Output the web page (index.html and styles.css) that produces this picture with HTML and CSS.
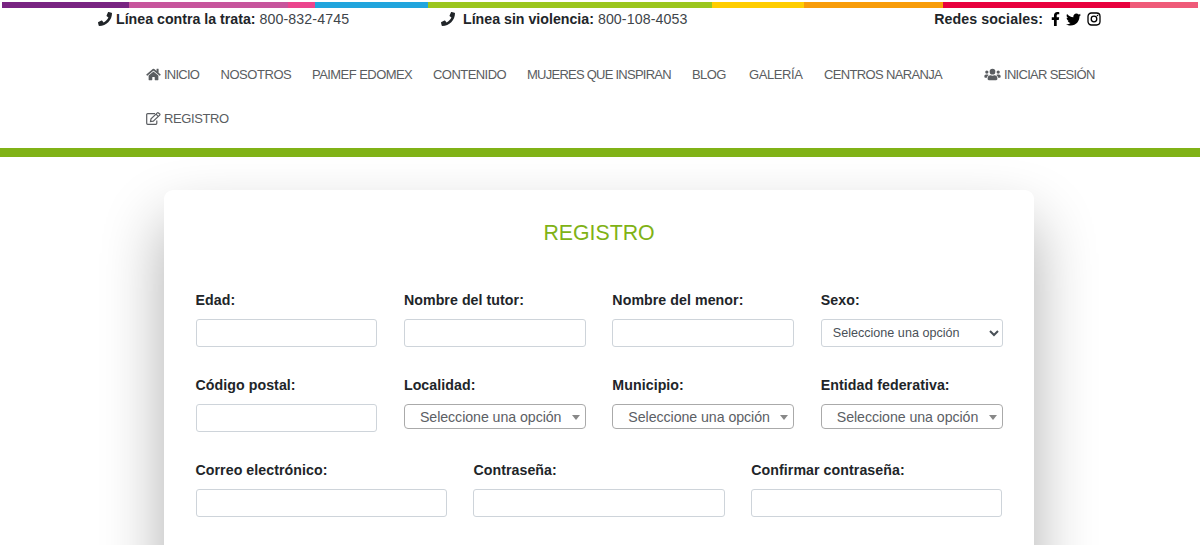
FILE: index.html
```html
<!DOCTYPE html>
<html lang="es">
<head>
    <meta charset="UTF-8">
    <meta name="viewport" content="width=device-width, initial-scale=1.0">
    <title>Registro</title>
    <link rel="stylesheet" href="styles.css">
</head>
<body>
    <header class="header">
        <div class="stripe"></div>
        <div class="top-bar">
            <div class="phone-line">
                <svg class="icon-phone" viewBox="0 0 512 512"><path d="M493.4 24.6l-104-24c-11.3-2.6-22.9 3.3-27.5 13.9l-48 112c-4.2 9.8-1.4 21.3 6.9 28l60.6 49.6c-36 76.7-98.9 140.5-177.2 177.2l-49.6-60.6c-6.8-8.3-18.2-11.1-28-6.9l-112 48C3.9 366.5-2 378.1.6 389.4l24 104C27.1 504.2 36.7 512 48 512c256.1 0 464-207.5 464-464 0-11.2-7.7-20.9-18.6-23.4z"/></svg>
                <b>Línea contra la trata:</b> <span>800-832-4745</span>
            </div>
            <div class="phone-line second">
                <svg class="icon-phone" viewBox="0 0 512 512"><path d="M493.4 24.6l-104-24c-11.3-2.6-22.9 3.3-27.5 13.9l-48 112c-4.2 9.8-1.4 21.3 6.9 28l60.6 49.6c-36 76.7-98.9 140.5-177.2 177.2l-49.6-60.6c-6.8-8.3-18.2-11.1-28-6.9l-112 48C3.9 366.5-2 378.1.6 389.4l24 104C27.1 504.2 36.7 512 48 512c256.1 0 464-207.5 464-464 0-11.2-7.7-20.9-18.6-23.4z"/></svg>
                <b>Línea sin violencia:</b> <span>800-108-4053</span>
            </div>
            <div class="social">
                <b>Redes sociales:</b>
                <svg class="icon-fb" viewBox="0 0 320 512"><path d="M279.14 288l14.22-92.66h-88.91v-60.13c0-25.35 12.42-50.06 52.24-50.06h40.42V6.26S260.43 0 225.36 0c-73.22 0-121.08 44.38-121.08 124.72v70.62H22.89V288h81.39v224h100.17V288z"/></svg>
                <svg class="icon-tw" viewBox="0 0 512 512"><path d="M459.37 151.716c.325 4.548.325 9.097.325 13.645 0 138.72-105.583 298.558-298.558 298.558-59.452 0-114.68-17.219-161.137-47.106 8.447.974 16.568 1.299 25.34 1.299 49.055 0 94.213-16.568 130.274-44.832-46.132-.975-84.792-31.188-98.112-72.772 6.498.974 12.995 1.624 19.818 1.624 9.421 0 18.843-1.3 27.614-3.573-48.081-9.747-84.143-51.98-84.143-102.985v-1.299c13.969 7.797 30.214 12.67 47.431 13.319-28.264-18.843-46.781-51.005-46.781-87.391 0-19.492 5.197-37.36 14.294-52.954 51.655 63.675 129.3 105.258 216.365 109.807-1.624-7.797-2.599-15.918-2.599-24.04 0-57.828 46.782-104.934 104.934-104.934 30.213 0 57.502 12.67 76.67 33.137 23.715-4.548 46.456-13.32 66.599-25.34-7.798 24.366-24.366 44.833-46.132 57.827 21.117-2.273 41.584-8.122 60.426-16.243-14.292 20.791-32.161 39.308-52.628 54.253z"/></svg>
                <svg class="icon-ig" viewBox="0 0 14 14"><rect x="1" y="1" width="12" height="12" rx="3.4"/><circle cx="7" cy="7" r="2.8"/><circle class="dot" cx="10.5" cy="3.5" r=".8"/></svg>
            </div>
        </div>

        <nav class="nav">
            <a href="#" class="nav-link inicio">
                <svg class="icon-home" viewBox="0 0 576 512"><path d="M280.37 148.26L96 300.11V464a16 16 0 0 0 16 16l112.06-.29a16 16 0 0 0 15.92-16V368a16 16 0 0 1 16-16h64a16 16 0 0 1 16 16v95.64a16 16 0 0 0 16 16.05L464 480a16 16 0 0 0 16-16V300L295.67 148.26a12.19 12.19 0 0 0-15.3 0zM571.6 251.47L488 182.56V44.05a12 12 0 0 0-12-12h-56a12 12 0 0 0-12 12v72.61L318.47 43a48 48 0 0 0-61 0L4.34 251.47a12 12 0 0 0-1.6 16.9l25.5 31A12 12 0 0 0 45.15 301l235.22-193.74a12.19 12.19 0 0 1 15.3 0L530.9 301a12 12 0 0 0 16.9-1.6l25.5-31a12 12 0 0 0-1.7-16.93z"/></svg>
                <span>INICIO</span>
            </a>
            <a href="#" class="nav-link nosotros">NOSOTROS</a>
            <a href="#" class="nav-link paimef">PAIMEF EDOMEX</a>
            <a href="#" class="nav-link contenido">CONTENIDO</a>
            <a href="#" class="nav-link mujeres">MUJERES QUE INSPIRAN</a>
            <a href="#" class="nav-link blog">BLOG</a>
            <a href="#" class="nav-link galeria">GALERÍA</a>
            <a href="#" class="nav-link centros">CENTROS NARANJA</a>
            <a href="#" class="nav-link sesion">
                <svg class="icon-users" viewBox="0 0 640 512"><circle cx="96" cy="160" r="64"/><circle cx="544" cy="160" r="64"/><circle cx="320" cy="144" r="112"/><path d="M64 256h64c18 0 34 7 45 19-40 22-69 62-75 109H32c-18 0-32-14-32-32v-32c0-35 29-64 64-64zM576 256h-64c-18 0-34 7-45 19 40 22 69 62 75 109h66c18 0 32-14 32-32v-32c0-35-29-64-64-64zM243 288c50 22 104 22 154 0 64 0 115 52 115 115v29c0 27-21 48-48 48H176c-27 0-48-21-48-48v-29c0-63 52-115 115-115z"/></svg>
                <span>INICIAR SESIÓN</span>
            </a>
            <a href="#" class="nav-link registro">
                <svg class="icon-edit" viewBox="0 0 15 13"><path d="M9 1.600H1.700Q.7 1.600 .7 2.600V11.300Q.7 12.300 1.700 12.300H9.800Q10.800 12.300 10.800 11.300V8.500"/><path d="M4.500 9.500L5 6.900L11.300 .9Q11.900 .5 12.500 1L13.700 2Q14.200 2.600 13.700 3.200L7.300 9.100Z"/><path d="M10 2.200L12.200 4.400"/></svg>
                <span>REGISTRO</span>
            </a>
        </nav>
    </header>

    <main class="card">
        <h2>REGISTRO</h2>
        <form>
            <div class="row">
                <div class="form-group">
                    <label for="edad">Edad:</label>
                    <input type="text" id="edad" class="form-control">
                </div>
                <div class="form-group">
                    <label for="tutor">Nombre del tutor:</label>
                    <input type="text" id="tutor" class="form-control">
                </div>
                <div class="form-group">
                    <label for="menor">Nombre del menor:</label>
                    <input type="text" id="menor" class="form-control">
                </div>
                <div class="form-group">
                    <label for="sexo">Sexo:</label>
                    <select id="sexo" class="form-control">
                        <option>Seleccione una opción</option>
                    </select>
                </div>
            </div>

            <div class="row">
                <div class="form-group">
                    <label for="cp">Código postal:</label>
                    <input type="text" id="cp" class="form-control">
                </div>
                <div class="form-group">
                    <label>Localidad:</label>
                    <div class="select2"><span>Seleccione una opción</span><i class="arrow"></i></div>
                </div>
                <div class="form-group">
                    <label>Municipio:</label>
                    <div class="select2"><span>Seleccione una opción</span><i class="arrow"></i></div>
                </div>
                <div class="form-group">
                    <label>Entidad federativa:</label>
                    <div class="select2"><span>Seleccione una opción</span><i class="arrow"></i></div>
                </div>
            </div>

            <div class="row">
                <div class="form-group">
                    <label for="correo">Correo electrónico:</label>
                    <input type="text" id="correo" class="form-control">
                </div>
                <div class="form-group">
                    <label for="password">Contraseña:</label>
                    <input type="password" id="password" class="form-control">
                </div>
                <div class="form-group">
                    <label for="confirmar">Confirmar contraseña:</label>
                    <input type="password" id="confirmar" class="form-control">
                </div>
            </div>
        </form>
    </main>
</body>
</html>
```
FILE: styles.css
```css
* {
    margin: 0;
    padding: 0;
    box-sizing: border-box;
}

body {
    font-family: "Liberation Sans", Arial, sans-serif;
    font-size: 14.2px;
    color: #212529;
    background: #fff;
    height: 545px;
    overflow: hidden;
}

svg {
    flex: none;
    fill: currentColor;
}

/* Header */
.header {
    height: 157px;
    padding-top: 2px;
    border-bottom: 9px solid #80b216;
    background: #fff;
}

.stripe {
    height: 6px;
    margin: 0 2px;
    background: linear-gradient(to right,
        #792482 0 127px, #c7559c 127px 286px, #eb458d 286px 313px,
        #21a5dd 313px 426px, #9bc61e 426px 710px, #ffcd00 710px 802px,
        #f89c09 802px 941px, #e8003d 941px 1128px, #ef5a79 1128px);
}

.top-bar {
    display: flex;
    align-items: center;
    height: 22px;
    padding: 0 98px;
}

.phone-line,
.social {
    display: flex;
    align-items: center;
}

.phone-line {
    width: 343px;
}

.phone-line b {
    margin: 0 4px;
}

.phone-line.second b {
    margin-left: 8px;
}

.phone-line span {
    color: #40454a;
    letter-spacing: 0.1px;
}

.icon-phone {
    width: 14px;
    height: 14px;
}

.social {
    margin-left: auto;
    color: #000;
}

.social b {
    color: #212529;
    letter-spacing: 0.1px;
}

.icon-fb {
    width: 9px;
    height: 14px;
    margin-left: 8px;
}

.icon-tw {
    width: 15px;
    height: 15px;
    margin-left: 6px;
}

.icon-ig {
    width: 14px;
    height: 14px;
    margin-left: 6px;
    margin-right: 1px;
}

.icon-ig rect,
.icon-ig circle {
    fill: none;
    stroke: #000;
    stroke-width: 1.3;
}

.icon-ig .dot {
    fill: #000;
    stroke: none;
}

.nav {
    display: flex;
    flex-wrap: wrap;
    padding: 22px 98px 0 146px;
}

.nav-link {
    display: flex;
    align-items: center;
    height: 44.5px;
    font-size: 13px;
    letter-spacing: -0.55px;
    white-space: nowrap;
    color: #5a5d61;
    text-decoration: none;
}

.inicio { width: 74.5px; letter-spacing: -0.75px; }
.nosotros { width: 91.5px; letter-spacing: -0.45px; }
.paimef { width: 121px; }
.contenido { width: 94px; }
.mujeres { width: 165px; letter-spacing: -0.75px; }
.blog { width: 57px; }
.galeria { width: 75px; letter-spacing: -0.4px; }
.centros { width: 160px; letter-spacing: -0.65px; }
.sesion { letter-spacing: -0.7px; }
.registro { letter-spacing: -0.4px; }

.nav-link svg {
    width: 15px;
    height: 13px;
    margin-right: 3px;
}

.nav-link .icon-users {
    width: 17px;
}

.icon-edit path {
    fill: none;
    stroke: currentColor;
    stroke-width: 1.2;
}

/* Registration card */
.card {
    width: 870px;
    height: 620px;
    margin: 32.5px 0 0 164px;
    padding: 29.5px 31.5px 0;
    border-radius: 9px;
    background: #fff;
    box-shadow: 0 32px 62px rgba(0, 0, 0, 0.32);
}

h2 {
    margin-bottom: 42px;
    font-size: 21.3px;
    font-weight: 400;
    line-height: 28px;
    text-align: center;
    color: #80b216;
}

.row {
    display: flex;
    gap: 26.7px;
    height: 85px;
}

.form-group {
    flex: 1;
    min-width: 0;
}

label {
    display: block;
    height: 30px;
    line-height: 22px;
    font-weight: bold;
    letter-spacing: 0.06px;
}

.form-control {
    display: block;
    width: 100%;
    height: 28px;
    padding: 0 7px;
    border: 1px solid #ced4da;
    border-radius: 3px;
    background: #fff;
    font-family: inherit;
    font-size: 12.6px;
    color: #495057;
}

.select2 {
    display: flex;
    align-items: center;
    justify-content: space-between;
    height: 25px;
    padding: 1px 5px 0 15px;
    border: 1px solid #aaa;
    border-radius: 4px;
    color: #5c6065;
    letter-spacing: -0.06px;
    white-space: nowrap;
}

.arrow {
    border: 4px solid transparent;
    border-top: 5px solid #888;
    border-bottom: 0;
}
```
